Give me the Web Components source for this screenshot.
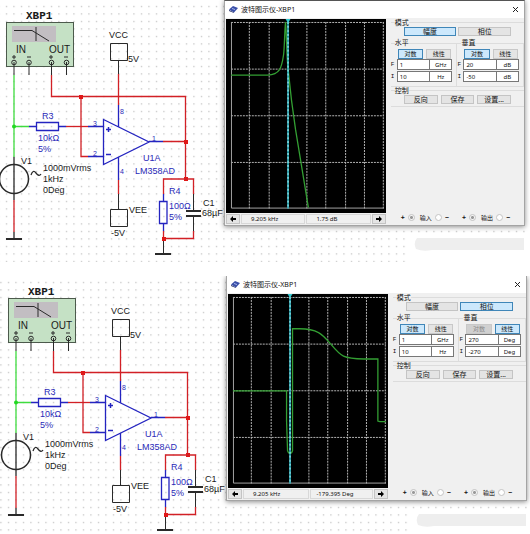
<!DOCTYPE html>
<html lang="zh-CN">
<head>
<meta charset="utf-8">
<title>波特图示仪-XBP1</title>
<style>
  body { margin: 0; background: #fff; font-family: "Liberation Sans", "Noto Sans CJK SC", sans-serif; }
</style>
</head>
<body>
<bode-scene>
  <circuit-schematic slot="schematic"></circuit-schematic>
  <bode-plotter mode="magnitude" style="--edge-top: 1px; --edge-right: 5px"></bode-plotter>
</bode-scene>
<bode-scene>
  <circuit-schematic slot="schematic" shift="2"></circuit-schematic>
  <bode-plotter mode="phase" style="--edge-left: 2px; --edge-right: 3px"></bode-plotter>
</bode-scene>

<script>
// Desktop area: the schematic fills it, the instrument window lies in the right column
class BodeScene extends HTMLElement {
  constructor() {
    super();
    this.attachShadow({ mode: "open" });
    this.shadowRoot.innerHTML = `
      <style>
        :host { display: grid; grid-template-columns: 224px 1fr; overflow: hidden; }
        :host(:last-of-type) { height: 258px; }
        ::slotted(circuit-schematic) { grid-column: 1 / -1; grid-row: 1; }
        ::slotted(bode-plotter) { grid-column: 2; grid-row: 1; align-self: start; }
      </style>
      <slot name="schematic"></slot>
      <slot></slot>
    `;
  }
}
customElements.define("bode-scene", BodeScene);

// Op-amp circuit on a dotted sheet
class CircuitSchematic extends HTMLElement {
  constructor() {
    super();
    this.attachShadow({ mode: "open" });
    const shift = Number(this.getAttribute("shift") ?? 0);

    this.shadowRoot.innerHTML = `
      <style>
        :host { display: block; }
        svg { display: block; width: 100%; height: 276px; }
        text { font: 9px "Liberation Sans", sans-serif; fill: #1a1a1a; }
        path, rect, circle { fill: none; }
        .k { stroke: #2a2a2a; }
        .r { stroke: #d22026; stroke-width: 1.300; }
        .b { stroke: #2424c0; }
        .g { stroke: #3fdc3f; }
        .thick { stroke-width: 2; }
        .dots { fill: url(#grid); }
        .paper { fill: #fff; }
        .smudge { fill: #eeeeee; }
        .case { fill: #c5e1c5; stroke: #4c5a4c; }
        .lcd { fill: #c2bec2; }
        .rd { fill: #e01818; }
        .gd { fill: #22d822; }
        .blue { fill: #2a2ab8; }
        .pin { font-size: 7px; }
        .port { font-size: 10px; }
        .name { font: bold 11px "Liberation Mono", monospace; }
      </style>
      <svg role="img" aria-label="LM358AD circuit">
        <defs>
          <pattern id="grid" x="3" y="3" width="7.5" height="7.5" patternUnits="userSpaceOnUse">
            <rect x="3" y="3" width="1" height="1" style="fill:#9a9a9a"/>
          </pattern>
        </defs>
        <g transform="translate(${shift} 0)">
          <rect class="dots" x="-2" y="3" width="527" height="259"/>
          <rect class="paper" x="407" y="236" width="125" height="40"/>
          <path class="smudge" d="M417 238 H524 V250 H432 Q423 252 416 249 Q413 243 417 238Z"/>

          <!-- bode plotter block -->
          <rect class="case" x="6.5" y="22.5" width="67" height="44"/>
          <rect class="lcd" x="12" y="26" width="44" height="16"/>
          <path class="k" d="M14 30.500 H32 L49 41 M36 27 V41"/>
          <g class="k">
            <circle cx="14" cy="62.500" r="2.300"/><circle cx="29" cy="62.500" r="2.300"/>
            <circle cx="51.500" cy="62.500" r="2.300"/><circle cx="66.500" cy="62.500" r="2.300"/>
            <path d="M14 62 V75 M29 62 V75 M51.500 62 V75 M66.500 62 V75"/>
            <path d="M12 57 H16 M14 55 V59 M27 57 H31 M49 57 H53 M51 55 V59 M64 57 H68"/>
          </g>
          <text class="name" x="26" y="19">XBP1</text>
          <text class="port" x="16" y="53">IN</text>
          <text class="port" x="49" y="53">OUT</text>

          <!-- source branch -->
          <path class="g" stroke-width="1.300" d="M14 75 V157 M14 126.500 H29"/>
          <circle class="gd" cx="14" cy="126.500" r="2"/>
          <path class="k" stroke-width="1.300" d="M14 157 V200 M14 232 V239"/>
          <circle class="k" stroke-width="1.500" cx="14" cy="179" r="14.500"/>
          <path class="r" d="M14 200 V232"/>
          <path class="k thick" d="M6 239 H22"/>
          <path class="k" stroke-width="1.300" d="M31 175 Q33 169 36 173 T41 174"/>
          <text x="21" y="164">V1</text>
          <text x="43" y="171">1000mVrms</text>
          <text x="43" y="182">1kHz</text>
          <text x="43" y="193">0Deg</text>

          <!-- R3 -->
          <path class="b" stroke-width="1.300" d="M29 126.500 H36 M58 126.500 H66 M36.500 122.500 H58.500 V130.500 H36.500Z"/>
          <path class="r" d="M66 126.500 H88"/>
          <text class="blue" x="42" y="119">R3</text>
          <text class="blue" x="38" y="141">10kΩ</text>
          <text class="blue" x="38" y="152">5%</text>

          <!-- feedback loop -->
          <path class="r" d="M51.500 75 V96.500 H185.500 V179 M81 96.500 V156.500 H88 M163 141.500 H185.500"/>
          <rect class="rd" x="79" y="95" width="4" height="4"/>
          <rect class="rd" x="184" y="140" width="4" height="4"/>
          <rect class="rd" x="184" y="177" width="4" height="4"/>

          <!-- U1A -->
          <path class="b" stroke-width="1.300" d="M103.500 119.500 L149 142 L103.500 164.500Z M88 126.500 H103 M88 156.500 H103 M149 141.500 H163 M118.500 105 V127 M118.500 157 V180"/>
          <path class="b" stroke-width="1.500" d="M106 129.500 H111 M108.500 127 V132 M106 154.500 H111"/>
          <text class="blue pin" x="93" y="126">3</text>
          <text class="blue pin" x="93" y="156">2</text>
          <text class="blue pin" x="120" y="114">8</text>
          <text class="blue pin" x="152" y="141">1</text>
          <text class="blue pin" x="120" y="174">4</text>
          <text class="blue" x="143" y="161">U1A</text>
          <text class="blue" x="135" y="174">LM358AD</text>

          <!-- supplies -->
          <path class="k" d="M110.500 43.500 H127.500 V60.500 H110.500Z M118.500 60 V74 M118.500 194 V209 M110.500 209.500 H127.500 V226.500 H110.500Z"/>
          <path class="r" d="M118.500 74 V105 M118.500 180 V194"/>
          <text x="109" y="38">VCC</text>
          <text x="128" y="62">5V</text>
          <text x="129" y="213">VEE</text>
          <text x="111" y="236">-5V</text>

          <!-- load -->
          <path class="r" d="M163.500 194 V179 H193.500 V194 M163.500 231 V238.500 H193.500 V231"/>
          <path class="b" stroke-width="1.300" d="M163.500 194 V201 M163.500 223 V231 M159.500 201.500 H167 V223.500 H159.500Z"/>
          <path class="k" d="M193.500 194 V211 M193.500 216 V231 M163.500 238 V254"/>
          <path class="k thick" d="M186 211 H201 M186 216 H201 M155 254 H171"/>
          <rect class="rd" x="162" y="237" width="4" height="4"/>
          <text class="blue" x="169" y="194">R4</text>
          <text class="blue" x="169" y="209">100Ω</text>
          <text class="blue" x="169" y="220">5%</text>
          <text x="203" y="206">C1</text>
          <text x="202" y="216">68µF</text>
        </g>
      </svg>
    `;
  }
}
customElements.define("circuit-schematic", CircuitSchematic);

const TRACES = {
  magnitude: "M5 56.500 H42 C54 56 56 50 58 36 C59 28 59 12 60 3 C61 14 61 36 62.500 50 L66 82 L70 111 L83 190",
  phase: "M5 97.500 H59 V128 L60 158 L61 160 H64 L65 158 V35 H72 C92 35 96 42 104 51 C114 63 116 65 137 65.500 H151 V128 L153 128.500 H159",
};

// Black graph screen with grid, trace and cursor
class BodeGraph extends HTMLElement {
  constructor() {
    super();
    this.attachShadow({ mode: "open" });
    let grid = "";
    for (let i = 1; i <= 8; i++) grid += `M${Math.round(5 + i * 19.25) - 0.5} 3V191`;
    for (let i = 0; i < 4; i++) grid += `M5 ${3.5 + i * 47}H159`;

    this.shadowRoot.innerHTML = `
      <style>
        :host { display: block; background: #000; }
        svg { display: block; width: 100%; }
        path { fill: none; }
        .grid { stroke: #b4b4b4; stroke-dasharray: 2 1; }
        .axis { stroke: #a4a4a4; }
        .trace { stroke: #339f33; stroke-width: 1.300; }
        .cursor { stroke: #1fb4c4; stroke-width: 1.500; }
        .glow { stroke: #b8f4f8; stroke-dasharray: 2 2; }
        .grip { fill: #35c8d0; }
      </style>
      <svg viewBox="0 0 161 195" role="img" aria-label="Bode plot">
        <path class="grid" d="${grid}"/>
        <path class="axis" d="M5.500 3V190.500H159"/>
        <path class="trace" d="${TRACES[this.getAttribute("mode")]}"/>
        <path class="cursor" d="M62.500 1V191"/>
        <path class="glow" d="M62.500 3V191"/>
        <path class="grip" d="M60 0H65L62.500 4Z"/>
      </svg>
    `;
  }
}
customElements.define("bode-graph", BodeGraph);

// Horizontal / vertical range settings
class AxisRange extends HTMLElement {
  constructor() {
    super();
    this.attachShadow({ mode: "open" });
    const get = (name) => this.getAttribute(name) ?? "";
    const [fv, fu] = get("final").split(" ");
    const [iv, iu] = get("initial").split(" ");
    const linear = this.hasAttribute("linear");

    this.shadowRoot.innerHTML = `
      <style>
        :host { display: block; flex: 1; min-width: 0; }
        fieldset { margin: 0; padding: 0 4px 4px 0; border: 1px solid #dcdcdc; border-left: 0; min-width: 0; }
        legend { margin-left: 4px; padding: 0; font-size: 7px; line-height: 8px; }
        .scale { display: flex; gap: 3px; margin: 2px 1px 0 7px; }
        button {
          flex: 1; height: 10px; padding: 0; border: 1px solid #c8c8c8; background: #e4e4e4;
          font: inherit; font-size: 6px; line-height: 8px; color: #111;
        }
        button.on { background: #cce8fc; border-color: #3f86b8; }
        button:disabled { background: #d0d0d0; color: #8a8a8a; }
        .row { display: grid; grid-template-columns: 6px 3fr 2fr; align-items: center; }
        .row + .row { margin-top: 1px; }
        label { font: 6px "Liberation Mono", monospace; }
        input {
          box-sizing: border-box; width: 100%; min-width: 0; height: 11px; padding: 0 2px;
          border: 1px solid #777; border-radius: 0; background: #fff;
          font: inherit; font-size: 6px; color: #111;
        }
        input + input { border-left: 0; text-align: center; }
      </style>
      <fieldset>
        <legend>${get("label")}</legend>
        <div class="scale">
          <button type="button" class="${linear ? "" : "on"}" ${linear ? "disabled" : ""}>对数</button>
          <button type="button" class="${linear ? "on" : ""}">线性</button>
        </div>
        <div class="row">
          <label for="f">F</label><input id="f" value="${fv}"><input aria-label="F unit" value="${fu}">
        </div>
        <div class="row">
          <label for="i">I</label><input id="i" value="${iv}"><input aria-label="I unit" value="${iu}">
        </div>
      </fieldset>
    `;

    // only one pair of terms on screen is pressed at a time; the other axis of a
    // phase plot keeps its log scale
    this.shadowRoot.querySelectorAll("button").forEach((button, _i, all) =>
      button.addEventListener("click", () =>
        all.forEach((b) => b.classList.toggle("on", b === button))
      )
    );
  }
}
customElements.define("axis-range", AxisRange);

// Terminal pair: + (o) label ( ) -
class TerminalPair extends HTMLElement {
  constructor() {
    super();
    this.attachShadow({ mode: "open" });
    this.shadowRoot.innerHTML = `
      <style>
        :host { display: flex; align-items: center; gap: 3px; font-size: 6px; line-height: 8px; }
        input {
          appearance: none; width: 7px; height: 7px; margin: 0;
          border: 1px solid #c4c4c4; border-radius: 50%; background: #fff;
        }
        input:checked { background: radial-gradient(#999 1px, #f4f4f4 2px); }
        label { margin-left: 2px; }
        b { font-size: 7px; }
      </style>
      <b>+</b><input id="plus" type="radio" name="t" aria-label="+" checked>
      <label for="plus"><slot></slot></label>
      <input type="radio" name="t" aria-label="-"><b>−</b>
    `;
  }
}
customElements.define("terminal-pair", TerminalPair);

// Instrument window: title bar, graph, readout bar and settings
class BodePlotter extends HTMLElement {
  constructor() {
    super();
    this.attachShadow({ mode: "open" });
    const mode = this.getAttribute("mode");
    const phase = mode === "phase";

    this.shadowRoot.innerHTML = `
      <style>
        :host {
          display: block; box-sizing: border-box;
          margin-left: var(--edge-left, 0); margin-right: var(--edge-right, 0);
          border: 1px solid #a4a4a4; border-top: var(--edge-top, 0) solid #555;
          background: #f0f0f0; box-shadow: 0 1px 5px rgba(0, 0, 0, .45);
          font-family: "Noto Sans", "Noto Sans CJK SC", sans-serif; font-size: 7px; color: #111;
        }
        header { display: flex; align-items: center; height: 17px; padding: 0 4px; background: #fff; }
        header svg { width: 9px; height: 7px; margin-right: 3px; }
        h1 { flex: 1; margin: 0; font-size: 7px; font-weight: normal; line-height: 10px; }
        button { padding: 0; font: inherit; line-height: 8px; color: #111; border: 1px solid #c4c4c4; background: #e4e4e4; }
        button.on { background: #cce8fc; border-color: #3f86b8; }
        .close { display: flex; padding: 1px; border: 0; background: none; }
        .close svg { width: 7px; height: 7px; margin: 0; }
        .body { display: flex; padding: 1px 0 1px 1px; }
        .screen { flex: 6; min-width: 0; }
        .status { display: flex; gap: 1px; height: 10px; margin-top: 1px; }
        .status button { width: 14px; height: 10px; line-height: 0; }
        .status svg { width: 6px; height: 6px; }
        output { flex: 1; padding-left: 9px; border: 1px solid #d8d8d8; font-size: 6px; line-height: 8px; white-space: nowrap; }
        output + output { padding-left: ${phase ? 5 : 9}px; }
        form { flex: 5; display: flex; flex-direction: column; min-width: 0; padding-left: 5px; }
        fieldset { display: flex; margin: 0; padding: 1px 13px 3px 13px; border: 1px solid #dcdcdc; border-width: 1px 0 0; min-width: 0; }
        legend { margin-left: -9px; padding: 0; line-height: 7px; }
        fieldset button { flex: 1; height: 9px; line-height: 7px; }
        .mode { gap: 2px; }
        .control { gap: 3px; border-bottom-width: 1px; padding-bottom: 2px; }
        .axes { display: flex; }
        .terminals { display: flex; justify-content: space-between; margin-top: auto; padding: 0 14px 2px 10px; }
      </style>
      <header>
        <svg viewBox="0 0 9 7"><path d="M0 3.500L4 0L9 2L5 6.500Z" fill="#3a4fa8"/><path d="M0 4L5 6.500V7L0 5Z" fill="#1c2660"/><path d="M3 2.500L6 3.500" stroke="#a8b8ee"/></svg>
        <h1>波特图示仪-XBP1</h1>
        <button class="close" type="button" aria-label="Close">
          <svg viewBox="0 0 7 7"><path d="M1 1L6 6M6 1L1 6" stroke="#222"/></svg>
        </button>
      </header>
      <div class="body">
        <div class="screen">
          <bode-graph mode="${mode}"></bode-graph>
          <div class="status">
            <button type="button" aria-label="Left"><svg viewBox="0 0 6 6"><path d="M0 3L3 0V2H6V4H3V6Z"/></svg></button>
            <output>9.205 kHz</output>
            <output>${phase ? "-179.395 Deg" : "1.75 dB"}</output>
            <button type="button" aria-label="Right"><svg viewBox="0 0 6 6"><path d="M6 3L3 0V2H0V4H3V6Z"/></svg></button>
          </div>
        </div>
        <form>
          <fieldset class="mode">
            <legend>模式</legend>
            <button type="button" class="${phase ? "" : "on"}">幅度</button>
            <button type="button" class="${phase ? "on" : ""}">相位</button>
          </fieldset>
          <div class="axes">
            <axis-range label="水平" final="1 GHz" initial="10 Hz"></axis-range>
            ${phase
              ? `<axis-range label="垂直" final="270 Deg" initial="-270 Deg" linear></axis-range>`
              : `<axis-range label="垂直" final="20 dB" initial="-50 dB"></axis-range>`}
          </div>
          <fieldset class="control">
            <legend>控制</legend>
            <button type="button">反向</button>
            <button type="button">保存</button>
            <button type="button">设置...</button>
          </fieldset>
          <div class="terminals">
            <terminal-pair>输入</terminal-pair>
            <terminal-pair>输出</terminal-pair>
          </div>
        </form>
      </div>
    `;
  }
}
customElements.define("bode-plotter", BodePlotter);
</script>
</body>
</html>
